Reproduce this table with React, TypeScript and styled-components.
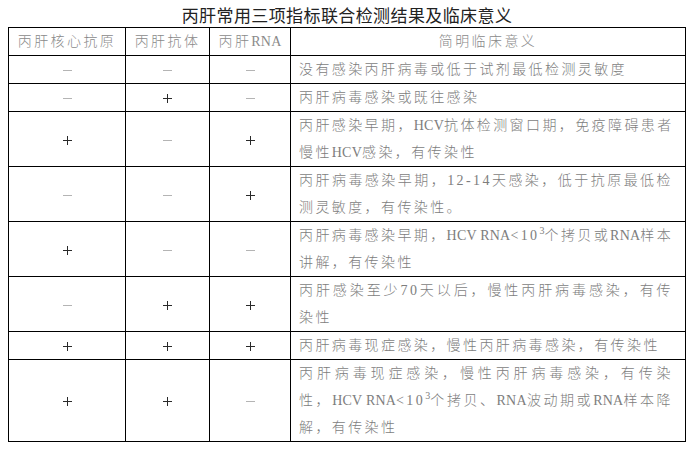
import React from "react";
import styled, { createGlobalStyle } from "styled-components";

const GlobalStyle = createGlobalStyle`
    body {
        margin: 0;
        background: #fff;
    }
`;

const Page = styled.div`
    width: 694px;
    height: 449px;
    background: #fff;
    overflow: hidden;
`;

const Title = styled.h1`
    margin: 0;
    height: 27px;
    line-height: 29px;
    text-align: center;
    font-family: "Noto Sans CJK SC", sans-serif;
    font-weight: 400;
    font-size: 17px;
    letter-spacing: 0.4px;
    color: #222;
`;

const Table = styled.table`
    margin-left: 8px;
    width: 677px;
    table-layout: fixed;
    border-collapse: collapse;
    font-family: "Liberation Serif", "Noto Sans CJK SC", serif;
    font-size: 14px;
    font-weight: 300;
    color: #7d7d7d;
`;

const Cell = styled.td<{ $align?: "left" | "center" }>`
    border: 1px solid #000;
    padding: ${p => (p.$align === "left" ? "0 12px 0 8px" : "0")};
    line-height: 27px;
    text-align: ${p => p.$align ?? "center"};
    vertical-align: middle;
    letter-spacing: 2.4px;
    white-space: nowrap;
`;

const HeadCell = styled(Cell).attrs({ as: "th" })`
    font-weight: 300;
    color: #8a8a8a;
`;

const Line = styled.div<{ $full?: boolean }>`
    text-align: left;
    text-align-last: ${p => (p.$full ? "justify" : "auto")};
`;

// plus / minus marks in the first three columns
const Sign = styled.span<{ $on: boolean }>`
    display: inline-block;
    position: relative;
    width: 9px;
    height: 9px;
    vertical-align: middle;

    &::before,
    &::after {
        content: "";
        position: absolute;
        background: ${p => (p.$on ? "#2a2a2a" : "#b4b4b4")};
    }
    &::before {
        left: 0;
        right: 0;
        top: 4px;
        height: 1px;
    }
    &::after {
        display: ${p => (p.$on ? "block" : "none")};
        top: 0;
        bottom: 0;
        left: 4px;
        width: 1px;
    }
`;

const Latin = styled.span`
    letter-spacing: 0.2px;
`;

const Sup = styled.sup`
    font-size: 10px;
    line-height: 0;
    vertical-align: 6px;
    letter-spacing: 0;
`;

type Row = { signs: [boolean, boolean, boolean]; lines: React.ReactNode[] };

const HcvRna = () => (
    <>
        <Latin>HCV RNA</Latin>&lt;10<Sup>3</Sup>
    </>
);

const rows: Row[] = [
    { signs: [false, false, false], lines: ["没有感染丙肝病毒或低于试剂最低检测灵敏度"] },
    { signs: [false, true, false], lines: ["丙肝病毒感染或既往感染"] },
    {
        signs: [true, false, true],
        lines: [
            <>丙肝感染早期，<Latin>HCV</Latin>抗体检测窗口期，免疫障碍患者</>,
            <>慢性<Latin>HCV</Latin>感染，有传染性</>,
        ],
    },
    {
        signs: [false, false, true],
        lines: ["丙肝病毒感染早期，12-14天感染，低于抗原最低检", "测灵敏度，有传染性。"],
    },
    {
        signs: [true, false, false],
        lines: [
            <>丙肝病毒感染早期，<HcvRna />个拷贝或<Latin>RNA</Latin>样本</>,
            "讲解，有传染性",
        ],
    },
    {
        signs: [false, true, true],
        lines: ["丙肝感染至少70天以后，慢性丙肝病毒感染，有传", "染性"],
    },
    { signs: [true, true, true], lines: ["丙肝病毒现症感染，慢性丙肝病毒感染，有传染性"] },
    {
        signs: [true, true, false],
        lines: [
            "丙肝病毒现症感染，慢性丙肝病毒感染，有传染",
            <>性，<HcvRna />个拷贝、<Latin>RNA</Latin>波动期或<Latin>RNA</Latin>样本降</>,
            "解，有传染性",
        ],
    },
];

const App: React.FC = () => {
    return (
        <Page>
            <GlobalStyle />
            <Title>丙肝常用三项指标联合检测结果及临床意义</Title>
            <Table>
                <colgroup>
                    <col style={{ width: 117 }} />
                    <col style={{ width: 84 }} />
                    <col style={{ width: 81 }} />
                    <col style={{ width: 395 }} />
                </colgroup>
                <thead>
                    <tr>
                        <HeadCell>丙肝核心抗原</HeadCell>
                        <HeadCell>丙肝抗体</HeadCell>
                        <HeadCell>丙肝<Latin>RNA</Latin></HeadCell>
                        <HeadCell>简明临床意义</HeadCell>
                    </tr>
                </thead>
                <tbody>
                    {rows.map((row, i) => (
                        <tr key={i}>
                            {row.signs.map((on, j) => (
                                <Cell key={j}>
                                    <Sign $on={on} aria-label={on ? "+" : "-"} />
                                </Cell>
                            ))}
                            <Cell $align="left">
                                {row.lines.map((line, k) => (
                                    <Line key={k} $full={k < row.lines.length - 1}>{line}</Line>
                                ))}
                            </Cell>
                        </tr>
                    ))}
                </tbody>
            </Table>
        </Page>
    );
};

export default App;
